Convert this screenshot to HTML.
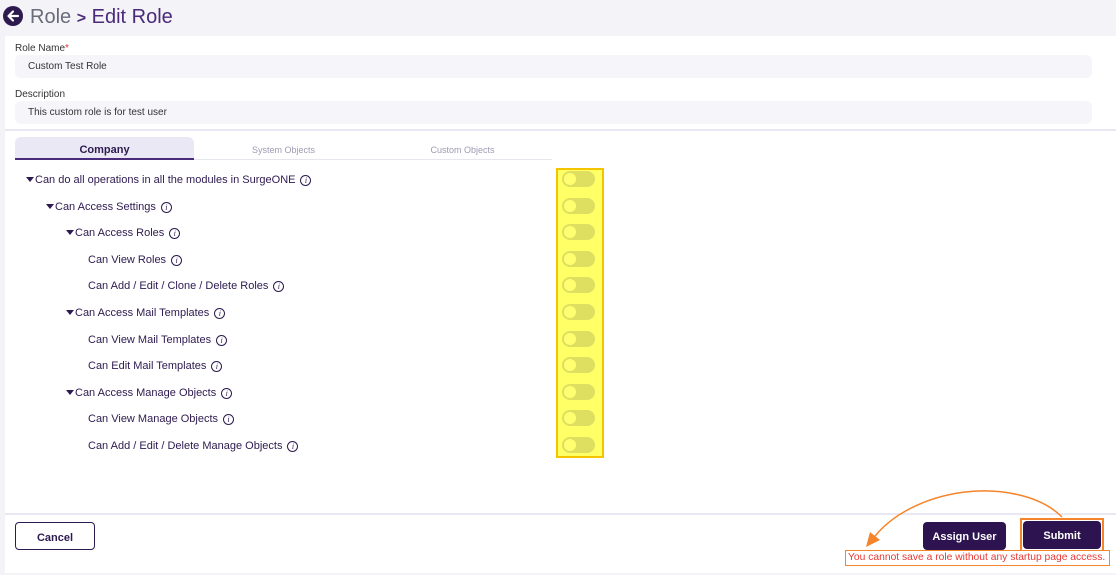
<!DOCTYPE html>
<html><head><meta charset="utf-8"><style>
*{margin:0;padding:0;box-sizing:border-box}
body{width:1116px;height:575px;background:#f3f3f8;font-family:"Liberation Sans",sans-serif;position:relative;overflow:hidden;color:#2d1a4f}
.abs{position:absolute}
.card{left:5px;top:36px;width:1111px;height:537px;background:#fff}
.lbl{font-size:10px;color:#333}
.inp{left:15px;width:1077px;height:23px;background:#f5f5fa;border-radius:6px;font-size:10px;padding-left:13px;line-height:24px;color:#333}
.row{font-size:11px;color:#2d1a4f;white-space:nowrap;line-height:14px}
.tri{display:inline-block;width:0;height:0;border-left:4px solid transparent;border-right:4px solid transparent;border-top:5px solid #2d1a4f;margin-right:1px;vertical-align:1px}
.i{display:inline-block;width:11px;height:11px;border:1px solid #2d1a4f;border-radius:50%;font-size:8px;line-height:9px;text-align:center;margin-left:5px;font-family:"Liberation Serif",serif;font-style:italic;vertical-align:0}
.tg{left:562px;width:33px;height:16px;background:#dede60;border-radius:8px}
.tg::after{content:"";position:absolute;left:2px;top:2px;width:12px;height:12px;border-radius:50%;background:#ffff70}
.btn{height:28px;border-radius:4px;font-size:11px;font-weight:bold;text-align:center;line-height:30px}
</style></head><body>
<div class="abs" style="left:3px;top:6px;width:20px;height:20px;border-radius:50%;background:#2d1a4f"></div>
<svg class="abs" style="left:3px;top:6px" width="20" height="20"><path d="M15 10H6M10 5.5L5.5 10L10 14.5" stroke="#fff" stroke-width="2.2" fill="none" stroke-linecap="round" stroke-linejoin="round"/></svg>
<div class="abs" style="left:30px;top:5px;font-size:20px;color:#6b6b7b;line-height:24px">Role <span style="color:#4a2a7a;font-size:16px;font-weight:bold">&gt;</span> <span style="color:#4a2a7a">Edit Role</span></div>
<div class="abs card"></div>
<div class="abs lbl" style="left:15px;top:43px">Role Name<span style="color:#e53935">*</span></div>
<div class="abs inp" style="top:55px">Custom Test Role</div>
<div class="abs lbl" style="left:15px;top:89px">Description</div>
<div class="abs inp" style="top:101px">This custom role is for test user</div>
<div class="abs" style="left:5px;top:129px;width:1111px;height:2px;background:#e8e8f5"></div>
<div class="abs" style="left:15px;top:137px;width:179px;height:23px;background:#ebe8f5;border-radius:6px 6px 0 0;border-bottom:2px solid #4a2a7a;font-size:11px;font-weight:bold;text-align:center;line-height:26px;color:#2d1a4f">Company</div>
<div class="abs" style="left:194px;top:159px;width:358px;height:1px;background:#e6e6ee"></div>
<div class="abs" style="left:194px;top:138px;width:179px;font-size:9px;color:#a09ab5;text-align:center;line-height:24px">System Objects</div>
<div class="abs" style="left:373px;top:138px;width:179px;font-size:9px;color:#a09ab5;text-align:center;line-height:24px">Custom Objects</div>

<div class="abs row" style="left:26px;top:173px"><span class="tri"></span>Can do all operations in all the modules in SurgeONE<span class="i">i</span></div>
<div class="abs row" style="left:46px;top:200px"><span class="tri"></span>Can Access Settings<span class="i">i</span></div>
<div class="abs row" style="left:66px;top:226px"><span class="tri"></span>Can Access Roles<span class="i">i</span></div>
<div class="abs row" style="left:88px;top:253px">Can View Roles<span class="i">i</span></div>
<div class="abs row" style="left:88px;top:279px">Can Add / Edit / Clone / Delete Roles<span class="i">i</span></div>
<div class="abs row" style="left:66px;top:306px"><span class="tri"></span>Can Access Mail Templates<span class="i">i</span></div>
<div class="abs row" style="left:88px;top:333px">Can View Mail Templates<span class="i">i</span></div>
<div class="abs row" style="left:88px;top:359px">Can Edit Mail Templates<span class="i">i</span></div>
<div class="abs row" style="left:66px;top:386px"><span class="tri"></span>Can Access Manage Objects<span class="i">i</span></div>
<div class="abs row" style="left:88px;top:412px">Can View Manage Objects<span class="i">i</span></div>
<div class="abs row" style="left:88px;top:439px">Can Add / Edit / Delete Manage Objects<span class="i">i</span></div>

<div class="abs" style="left:556px;top:168px;width:48px;height:290px;background:#ffff66;border:2px solid #f5c400"></div>
<div class="abs tg" style="top:171px"></div>
<div class="abs tg" style="top:198px"></div>
<div class="abs tg" style="top:224px"></div>
<div class="abs tg" style="top:251px"></div>
<div class="abs tg" style="top:277px"></div>
<div class="abs tg" style="top:304px"></div>
<div class="abs tg" style="top:331px"></div>
<div class="abs tg" style="top:357px"></div>
<div class="abs tg" style="top:384px"></div>
<div class="abs tg" style="top:410px"></div>
<div class="abs tg" style="top:437px"></div>

<div class="abs" style="left:5px;top:513px;width:1111px;height:2px;background:#e8e8f5"></div>
<div class="abs btn" style="left:15px;top:522px;width:80px;border:1px solid #2d1a4f;color:#2d1a4f;background:#fff">Cancel</div>
<div class="abs btn" style="left:923px;top:522px;width:83px;background:#2d1450;color:#fff">Assign User</div>
<div class="abs" style="left:1020px;top:518px;width:84px;height:34px;border:2px solid #f5842a"></div>
<div class="abs btn" style="left:1023px;top:521px;width:78px;background:#2d1450;color:#fff">Submit</div>
<div class="abs" style="left:845px;top:550px;width:265px;height:16px;border:1.5px solid #f5842a;font-size:10.3px;color:#e53935;line-height:14px;padding-left:2px;white-space:nowrap;background:#fff">You cannot save a role without any startup page access.</div>
<svg class="abs" style="left:0;top:0" width="1116" height="575"><path d="M1062 517C1040 495 1000 488 965 492C925 497 890 515 872 540" stroke="#f5842a" stroke-width="1.5" fill="none"/><path d="M866 547L870 532L880 540Z" fill="#f5842a"/></svg>
</body></html>
